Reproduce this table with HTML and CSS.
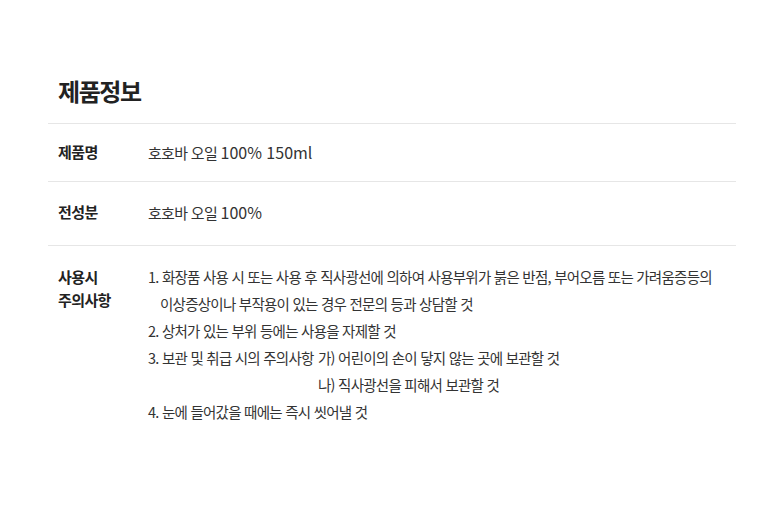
FILE: index.html
```html
<!DOCTYPE html>
<html lang="ko">
<head>
<meta charset="utf-8">
<link rel="stylesheet" href="styles.css">
</head>
<body>
<div class="wrap">
  <h2 class="title">제품정보</h2>
  <div class="table">
    <div class="row row-1">
      <div class="label">제품명</div>
      <div class="value">호호바 오일 <span class="num">100% 150ml</span></div>
    </div>
    <div class="row row-2">
      <div class="label">전성분</div>
      <div class="value">호호바 오일 <span class="num">100%</span></div>
    </div>
    <div class="row row-3">
      <div class="label">사용시<br>주의사항</div>
      <div class="value list">
        <p class="item">1. 화장품 사용 시 또는 사용 후 직사광선에 의하여 사용부위가 붉은 반점, 부어오름 또는 가려움증등의</p>
        <p class="item indent">이상증상이나 부작용이 있는 경우 전문의 등과 상담할 것</p>
        <p class="item">2. 상처가 있는 부위 등에는 사용을 자제할 것</p>
        <p class="item"><span class="lead">3. 보관 및 취급 시의 주의사항</span><span>가) 어린이의 손이 닿지 않는 곳에 보관할 것</span></p>
        <p class="item"><span class="lead"></span><span>나) 직사광선을 피해서 보관할 것</span></p>
        <p class="item">4. 눈에 들어갔을 때에는 즉시 씻어낼 것</p>
      </div>
    </div>
  </div>
</div>
</body>
</html>
```
FILE: styles.css
```css
html, body {
  margin: 0;
  padding: 0;
  background: #fff;
}
body {
  font-family: "Noto Sans CJK KR", "Noto Sans", sans-serif;
  color: #222;
}
.wrap {
  padding: 74px 43px 0 48px;
}
.title {
  margin: 0 0 0 10px;
  font-size: 24px;
  line-height: 34px;
  font-weight: 700;
  letter-spacing: -0.06em;
  padding-bottom: 15px;
}
.table {
  border-top: 1px solid #e6e6e6;
}
.row {
  display: flex;
  border-bottom: 1px solid #e6e6e6;
}
.row-1 {
  padding: 16px 0 16px 10px;
}
.row-2 {
  padding: 18px 0 20px 10px;
}
.row-3 {
  padding: 17px 0 0 10px;
  border-bottom: none;
}
.label {
  width: 90px;
  flex: none;
  font-size: 15px;
  font-weight: 700;
  letter-spacing: -0.04em;
  line-height: 24px;
  color: #222;
}
.row-3 .label {
  line-height: 23px;
  padding-top: 2px;
}
.value {
  font-size: 15px;
  font-weight: 400;
  letter-spacing: -0.7px;
  line-height: 24px;
  color: #333;
}
.num {
  font-size: 16px;
  letter-spacing: 0;
}
.list {
  font-size: 14.5px;
  letter-spacing: -0.75px;
  line-height: 27px;
}
.item {
  margin: 0;
  white-space: nowrap;
  display: flex;
}
.indent {
  padding-left: 12px;
}
.lead {
  flex: none;
  width: 170px;
}
```
